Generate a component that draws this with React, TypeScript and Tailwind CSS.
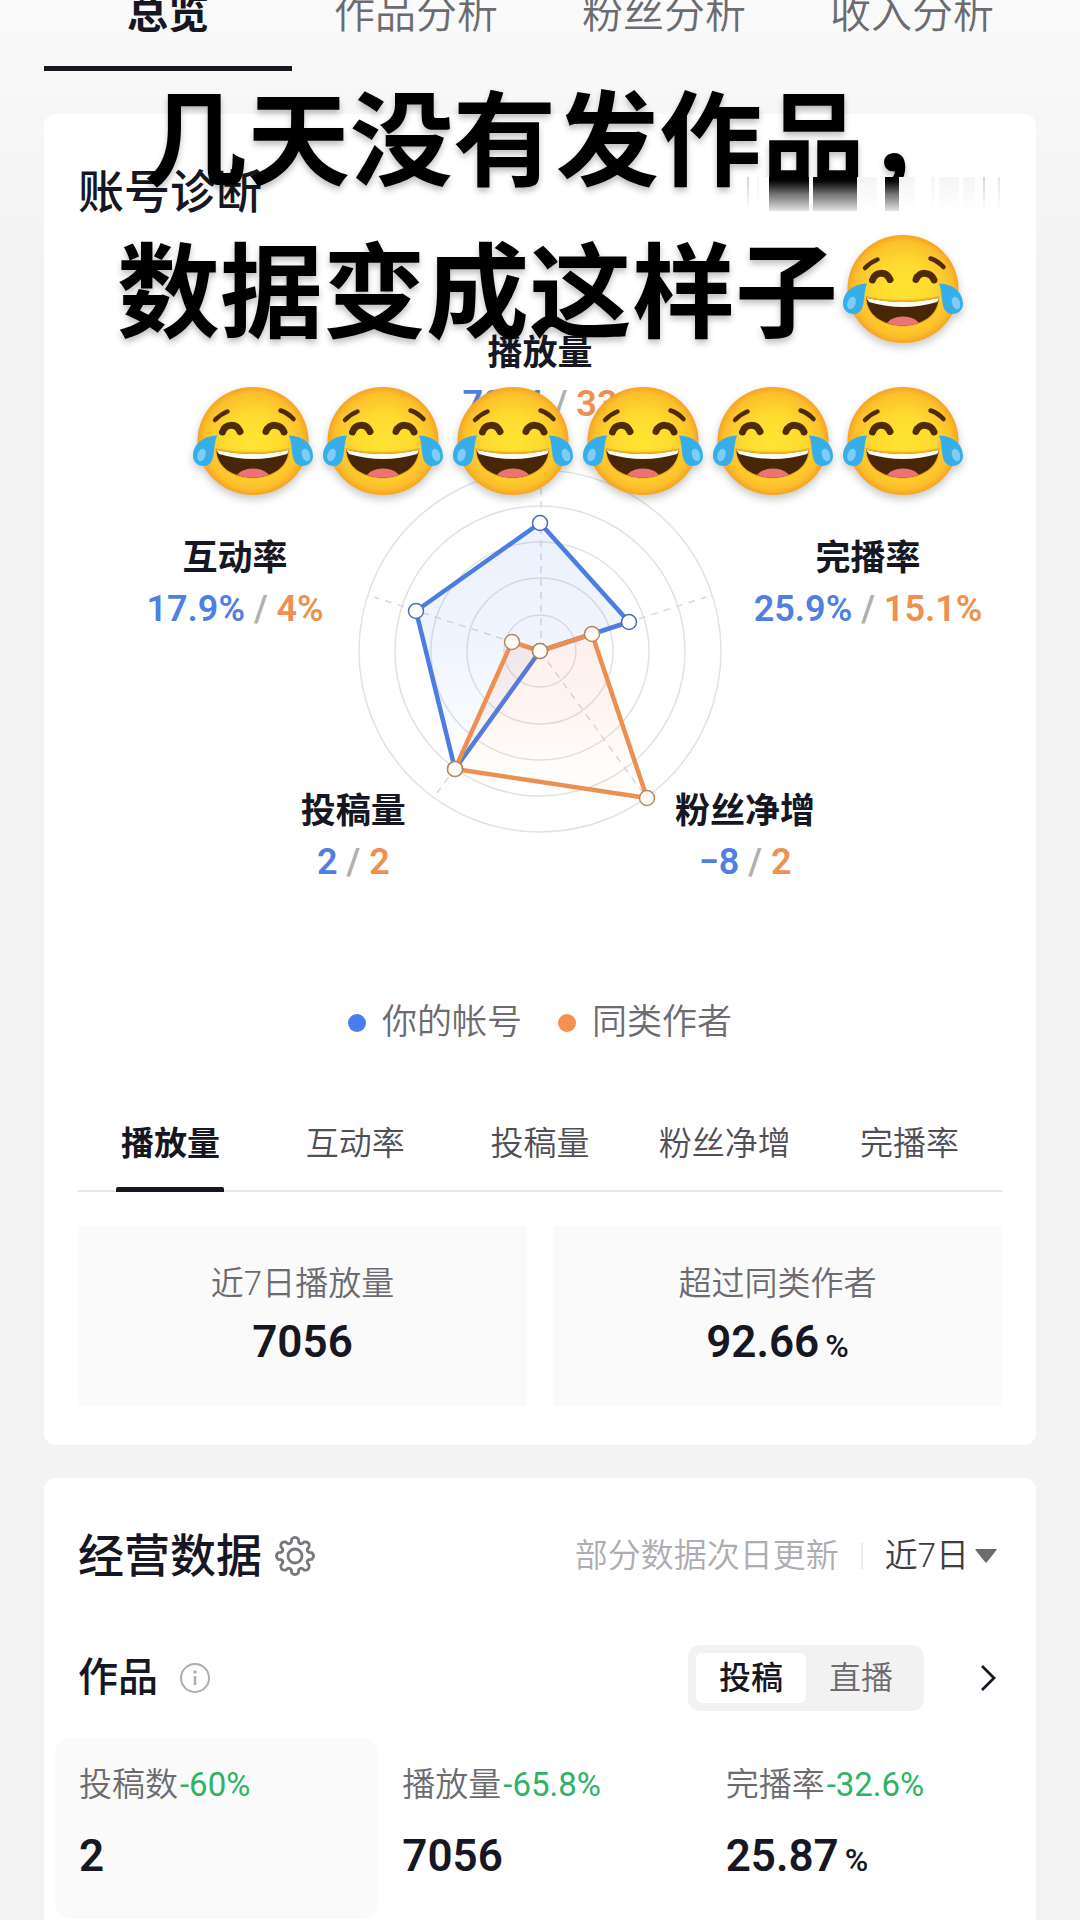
import { ReactNode, useId, useState } from "react";

const FONT = "font-[Roboto,'Noto_Sans_CJK_SC',sans-serif]";

function JoyEmoji() {
  const id = useId();
  return (
    <svg
      role="img"
      aria-label="笑哭"
      viewBox="0 0 120 108"
      className="mx-[5px] h-[108px] w-[120px] shrink-0 overflow-visible drop-shadow-[0_4px_4px_rgba(0,0,0,0.22)]"
    >
      <defs>
        <radialGradient id={`${id}f`} cx="0.5" cy="0.5" r="0.5">
          <stop offset="0" stopColor="#ffe433" />
          <stop offset="0.5" stopColor="#fedb2f" />
          <stop offset="0.88" stopColor="#fbc02b" />
          <stop offset="1" stopColor="#f5a422" />
        </radialGradient>
        <clipPath id={`${id}m`}>
          <path d="M23.5 63 Q60 71 95.5 63 C95 80 79 90.5 60 90.5 C40 90.5 24 80 23.5 63Z" />
        </clipPath>
      </defs>
      <ellipse cx="60" cy="54" rx="55.5" ry="54" fill={`url(#${id}f)`} />
      <g fill="none" stroke="#4e2c0a" strokeLinecap="round">
        <path d="M22 33 Q28 27 34.5 24.5" strokeWidth="4.5" />
        <path d="M87.5 23.5 Q95 26 100.5 32" strokeWidth="4.5" />
        <path d="M29.5 45 C32 37 43 35.5 47 44.5" strokeWidth="7" />
        <path d="M73 44.5 C76 35.5 88 37 91 45" strokeWidth="7" />
      </g>
      <path
        d="M22.5 61 Q60 69 96.5 61 C97 81 80 91.5 60 91.5 C39 91.5 22.5 81 22.5 61Z"
        fill="#e9920f"
        opacity="0.6"
      />
      <g clipPath={`url(#${id}m)`}>
        <rect x="20" y="60" width="80" height="34" fill="#482709" />
        <path d="M20 58 H100 L94 67 Q60 77 26 67Z" fill="#fffdf2" />
        <ellipse cx="60" cy="91.5" rx="17" ry="10" fill="#ec7373" />
      </g>
      <path
        d="M24 48.5 C9 49 0 58 0 69 C0 75 5 79 10.5 79 C17 79 19.5 74 20.5 68 C21.5 61 21.5 55 24 48.5Z"
        fill="#35aeea"
      />
      <ellipse cx="8.5" cy="68" rx="4" ry="6.5" fill="#7fcdf7" transform="rotate(18 8.5 68)" />
      <path
        d="M96 48.5 C111 49 120 58 120 69 C120 75 115 79 109.5 79 C103 79 100.5 74 99.5 68 C98.5 61 98.5 55 96 48.5Z"
        fill="#35aeea"
      />
      <ellipse cx="113" cy="68" rx="4" ry="6.5" fill="#7fcdf7" transform="rotate(-18 113 68)" />
    </svg>
  );
}

function Caption() {
  return (
    <div className="pointer-events-none absolute top-[61px] right-[112px] z-10 flex flex-col items-end font-['Noto_Sans_CJK_SC',sans-serif] text-[103px] leading-[145px] font-bold whitespace-nowrap text-black [text-shadow:0_4px_6px_rgba(0,0,0,0.25)]">
      <p className="h-[152px]">几天没有发作品，</p>
      <p className="flex h-[152px]">
        数据变成这样子
        <span className="flex items-center">
          <JoyEmoji />
        </span>
      </p>
      <p className="flex h-[152px] items-center">
        {[0, 1, 2, 3, 4, 5].map((n) => (
          <JoyEmoji key={n} />
        ))}
      </p>
    </div>
  );
}

function Smear() {
  return (
    <div aria-hidden="true" className="relative z-20 mt-[4px] flex h-[34px] w-[257px] bg-white">
      <i className="ml-[2px] w-[2px] bg-linear-to-b from-neutral-300 to-white" />
      <i className="ml-2 w-[2px] bg-linear-to-b from-neutral-100 to-white" />
      <i className="ml-[10px] w-10 bg-linear-to-b from-black via-neutral-500 to-neutral-200" />
      <i className="ml-1 w-11 bg-linear-to-b from-black via-neutral-500 to-neutral-200" />
      <i className="w-5 bg-linear-to-b from-neutral-100 to-white" />
      <i className="ml-2 w-[14px] bg-linear-to-b from-black via-neutral-500 to-neutral-200" />
      <i className="w-4 bg-linear-to-b from-neutral-100 to-white" />
      <i className="ml-4 w-1 bg-linear-to-b from-neutral-100 to-white" />
      <i className="ml-1 w-5 bg-linear-to-b from-neutral-100 to-white" />
      <i className="ml-1 w-3 bg-linear-to-b from-neutral-100 to-white" />
      <i className="ml-2 w-[2px] bg-linear-to-b from-neutral-300 to-white" />
      <i className="ml-[13px] w-[2px] bg-linear-to-b from-neutral-200 to-white" />
    </div>
  );
}

const BLUE: [number, number][] = [
  [182, 54],
  [271, 153],
  [182, 182],
  [97, 300],
  [58, 142],
];
const ORANGE: [number, number][] = [
  [182, 182],
  [234, 165],
  [289, 329],
  [97, 300],
  [154, 173],
];

const toPoints = (pts: [number, number][]) => pts.map((p) => p.join(",")).join(" ");

function Radar() {
  return (
    <svg viewBox="0 0 364 364" className="size-[364px]" aria-hidden="true">
      <defs>
        <linearGradient id="blueFill" x1="0" y1="0" x2="0" y2="1">
          <stop offset="0" stopColor="#3f78f0" stopOpacity="0.1" />
          <stop offset="0.5" stopColor="#3f78f0" stopOpacity="0.08" />
          <stop offset="1" stopColor="#3f78f0" stopOpacity="0" />
        </linearGradient>
        <linearGradient id="orangeFill" x1="0" y1="0" x2="0" y2="1">
          <stop offset="0" stopColor="#f2643c" stopOpacity="0.1" />
          <stop offset="0.45" stopColor="#f2643c" stopOpacity="0.07" />
          <stop offset="1" stopColor="#f5a050" stopOpacity="0" />
        </linearGradient>
      </defs>
      <g fill="none" stroke="#e2e2e2" strokeWidth="1.5">
        {[36, 73, 109, 145, 181].map((r) => (
          <circle key={r} cx="182" cy="182" r={r} />
        ))}
      </g>
      <g stroke="#dadade" strokeWidth="1.5" strokeDasharray="7 6">
        <path d="M183 182 V4" />
        <path d="M182 182 L348 128" />
        <path d="M182 182 L285 324" />
        <path d="M182 182 L79 324" />
        <path d="M182 182 L16 128" />
      </g>
      <polygon
        points={toPoints(BLUE)}
        fill="url(#blueFill)"
        stroke="#4b7de3"
        strokeWidth="4.5"
        strokeLinejoin="round"
      />
      <polygon
        points={toPoints(ORANGE)}
        fill="url(#orangeFill)"
        stroke="#ec9052"
        strokeWidth="4.5"
        strokeLinejoin="round"
      />
      <g fill="#fff" strokeWidth="1.5">
        {BLUE.map(([x, y]) => (
          <circle key={`${x}-${y}`} cx={x} cy={y} r="7.5" stroke="#4a6fae" />
        ))}
        {ORANGE.map(([x, y]) => (
          <circle key={`${x}-${y}`} cx={x} cy={y} r="7.5" fill="#fffdf8" stroke="#b8895c" />
        ))}
      </g>
    </svg>
  );
}

function Metric({ name, mine, peer, place }: { name: string; mine: string; peer: string; place: string }) {
  return (
    <div className={`absolute -translate-x-1/2 text-center text-[35px] leading-[51px] font-bold whitespace-nowrap ${place}`}>
      <p>{name}</p>
      <p className="text-[36px] font-semibold">
        <span className="text-[#4f7fe0]">{mine}</span>
        <span className="text-[#b0b0b0]"> / </span>
        <span className="text-[#ee9050]">{peer}</span>
      </p>
    </div>
  );
}

function Figure({ value, unit }: { value: string; unit?: string }) {
  return (
    <p className="flex items-baseline gap-[6px] text-[44px] leading-[54px] font-semibold">
      {value}
      {unit && <span className="text-[32px] leading-none font-medium">{unit}</span>}
    </p>
  );
}

function Summary({ label, children }: { label: string; children: ReactNode }) {
  return (
    <div className="flex flex-col items-center gap-[7px] bg-[#fafafa] pt-[34px] pb-[37px]">
      <p className="text-[33px] leading-[48px] font-[350] text-[#6b6b70]">{label}</p>
      {children}
    </div>
  );
}

function Gear() {
  const teeth = 8;
  const pts: string[] = [];
  for (let i = 0; i < teeth; i++) {
    const a = (i * 2 * Math.PI) / teeth - Math.PI / 2;
    const at = (r: number, d: number) =>
      `${(20 + r * Math.cos(a + d)).toFixed(1)} ${(20 + r * Math.sin(a + d)).toFixed(1)}`;
    pts.push(
      `${i ? "L" : "M"}${at(14.5, -0.25)} L${at(17, -0.2)} Q${at(20.5, 0)} ${at(17, 0.2)} L${at(14.5, 0.25)} Q${at(12.5, 0.39)} ${at(14.5, 0.535)}`
    );
  }
  return (
    <svg viewBox="0 0 40 40" className="size-10" fill="none" stroke="#77777c" strokeWidth="2.8" strokeLinejoin="round" aria-hidden="true">
      <path d={`${pts.join(" ")}Z`} />
      <circle cx="20" cy="20" r="7" />
    </svg>
  );
}

const PAGES = ["总览", "作品分析", "粉丝分析", "收入分析"];
const METRICS = ["播放量", "互动率", "投稿量", "粉丝净增", "完播率"];
const STATS = [
  { label: "投稿数", change: "-60%", value: "2" },
  { label: "播放量", change: "-65.8%", value: "7056" },
  { label: "完播率", change: "-32.6%", value: "25.87", unit: "%" },
];

export default function App() {
  const [page, setPage] = useState(0);
  const [metric, setMetric] = useState(0);
  const [kind, setKind] = useState(0);
  const [stat, setStat] = useState(0);

  return (
    <div
      className={`relative flex min-h-screen flex-col overflow-hidden bg-[#f3f3f3] bg-[linear-gradient(#fafafa,#f3f3f3_260px)] bg-no-repeat px-11 text-[#161722] ${FONT}`}
    >
      <nav className="-mt-4 grid grid-cols-4">
        {PAGES.map((name, i) => (
          <button
            key={name}
            type="button"
            onClick={() => setPage(i)}
            className={`h-[87px] border-b-[5px] pb-[22px] text-[41px] leading-[60px] ${
              i === page ? "border-[#161722] font-bold" : "border-transparent font-[350] text-[#6b6b70]"
            }`}
          >
            {name}
          </button>
        ))}
      </nav>

      <section className="mt-[43px] rounded-xl bg-white px-[34px] pt-12 pb-[39px]">
        <header className="flex h-[60px] items-center justify-between">
          <h2 className="text-[46px] leading-[60px] font-medium">账号诊断</h2>
          <Smear />
        </header>

        <div className="relative mx-auto flex h-[776px] max-w-[924px] justify-center pt-[247px]">
          <Radar />
          <Metric name="播放量" mine="7056" peer="33" place="left-1/2 top-[106px]" />
          <Metric name="互动率" mine="17.9%" peer="4%" place="left-[17%] top-[311px]" />
          <Metric name="完播率" mine="25.9%" peer="15.1%" place="left-[85.5%] top-[311px]" />
          <Metric name="投稿量" mine="2" peer="2" place="left-[29.8%] top-[564px]" />
          <Metric name="粉丝净增" mine="−8" peer="2" place="left-[72.2%] top-[564px]" />
        </div>

        <ul className="flex justify-center gap-9 text-[35px] leading-[50px] font-[350] text-[#6b6b70]">
          <li className="flex items-center gap-4">
            <span className="size-[18px] rounded-full bg-[#4a7cf0]" />
            你的帐号
          </li>
          <li className="flex items-center gap-4">
            <span className="size-[18px] rounded-full bg-[#f5904e]" />
            同类作者
          </li>
        </ul>

        <div className="mt-[46px] grid grid-cols-5 border-b-2 border-[#e6e6e6]">
          {METRICS.map((name, i) => (
            <button
              key={name}
              type="button"
              onClick={() => setMetric(i)}
              className={`-mb-[2px] flex h-[98px] flex-col items-center text-[33px] ${
                i === metric ? "font-bold" : "font-[350] text-[#4f4f55]"
              }`}
            >
              <span className="pt-[6px] leading-[87px]">{name}</span>
              {i === metric && <span className="h-[5px] w-[108px] rounded-t-xs bg-[#161722]" />}
            </button>
          ))}
        </div>

        <div className="mt-[34px] grid grid-cols-2 gap-[26px]">
          <Summary label="近7日播放量">
            <Figure value="7056" />
          </Summary>
          <Summary label="超过同类作者">
            <Figure value="92.66" unit="%" />
          </Summary>
        </div>
      </section>

      <section className="mt-[33px] flex-1 rounded-t-xl bg-white px-[34px] pt-12">
        <header className="flex h-[60px] items-center">
          <h2 className="text-[46px] leading-[60px] font-medium">经营数据</h2>
          <button type="button" aria-label="设置" className="ml-[13px]">
            <Gear />
          </button>
          <p className="ml-auto text-[33px] font-[350] text-[#adadb1]">部分数据次日更新</p>
          <span className="mx-[22px] h-[26px] w-[2px] bg-[#ececec]" />
          <label className="relative flex items-center pr-[5px]">
            <select
              aria-label="时间范围"
              className="field-sizing-content appearance-none bg-transparent pr-[28px] text-[33px] font-[350] text-[#3c3c42] outline-none"
            >
              <option>近7日</option>
              <option>近30日</option>
            </select>
            <svg viewBox="0 0 22 14" className="pointer-events-none absolute right-[5px] h-[14px] w-[22px]" aria-hidden="true">
              <path d="M1 0 H21 Q22 0 21.5 1 L12 13 Q11 14 10 13 L0.5 1 Q0 0 1 0Z" fill="#6b6b70" />
            </svg>
          </label>
        </header>

        <div className="mt-[59px] flex items-center">
          <h3 className="text-[40px] leading-[58px] font-medium">作品</h3>
          <button type="button" aria-label="说明" className="ml-[22px]">
            <svg viewBox="0 0 30 30" className="size-[30px]" fill="none" stroke="#adadb1" strokeWidth="2" aria-hidden="true">
              <circle cx="15" cy="15" r="14" />
              <path d="M15 13 V22" strokeWidth="2.5" />
              <path d="M15 7.5 V10.5" strokeWidth="3" />
            </svg>
          </button>
          <div className="ml-auto flex rounded-xl bg-[#f2f2f3] p-2">
            {["投稿", "直播"].map((name, i) => (
              <button
                key={name}
                type="button"
                onClick={() => setKind(i)}
                className={`h-[50px] w-[110px] rounded-md text-[32px] leading-[50px] ${
                  i === kind ? "bg-white font-medium" : "font-[350] text-[#6b6b70]"
                }`}
              >
                {name}
              </button>
            ))}
          </div>
          <button type="button" aria-label="查看更多" className="mr-[6px] ml-[56px]">
            <svg viewBox="0 0 16 28" className="h-7 w-4" fill="none" stroke="#161722" strokeWidth="2.8" aria-hidden="true">
              <path d="M2 2 L14 14 L2 26" />
            </svg>
          </button>
        </div>

        <div className="-mx-[23px] mt-[27px] grid grid-cols-3">
          {STATS.map((s, i) => (
            <button
              key={s.label}
              type="button"
              onClick={() => setStat(i)}
              className={`rounded-2xl px-6 pt-[23px] pb-[36px] text-left ${i === stat ? "bg-[#fafafa]" : ""}`}
            >
              <p className="mb-5 flex gap-[2px] text-[33px] leading-[48px]">
                <span className="font-[350] text-[#6b6b70]">{s.label}</span>
                <span className="text-[#2fb266]">{s.change}</span>
              </p>
              <Figure value={s.value} unit={s.unit} />
            </button>
          ))}
        </div>
      </section>

      <Caption />
    </div>
  );
}
